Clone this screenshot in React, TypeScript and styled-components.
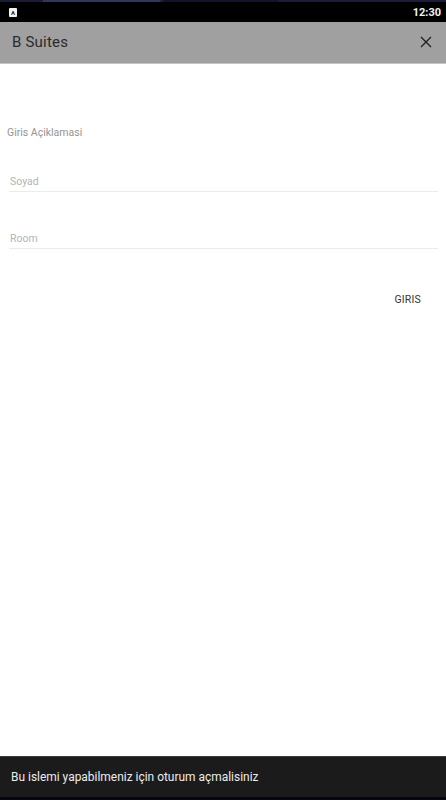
import React from "react";
import styled, { createGlobalStyle } from "styled-components";

const Global = createGlobalStyle`
  html, body {
    margin: 0;
    padding: 0;
    background: #fff;
  }
  * {
    box-sizing: border-box;
  }
`;

const Pantalla = styled.div`
  width: 446px;
  height: 800px;
  display: flex;
  flex-direction: column;
  overflow: hidden;
  background: #fff;
  font-family: Roboto, "Liberation Sans", sans-serif;
`;

const FranjaSuperior = styled.div`
  height: 2px;
  display: flex;
`;

const Tramo = styled.div<{ $ancho: number; $color: string }>`
  width: ${({ $ancho }) => $ancho}px;
  background: ${({ $color }) => $color};
`;

const BarraEstado = styled.div`
  height: 20px;
  padding: 0 5px 0 9px;
  display: flex;
  align-items: center;
  justify-content: space-between;
  background: #000;
`;

const IconoNotificacion = styled.div`
  width: 8px;
  height: 9px;
  border-radius: 1px;
  background: #f2f2f2;
  color: #222;
  font-size: 6px;
  font-weight: 700;
  line-height: 9px;
  text-align: center;
`;

const Hora = styled.span`
  color: #f2f2f2;
  font-size: 11px;
  font-weight: 700;
`;

const Cabecera = styled.header`
  height: 42px;
  padding: 0 14px 2px 12px;
  display: flex;
  align-items: center;
  justify-content: space-between;
  background: #a0a0a0;
  border-bottom: 1px solid #c4c4c4;
`;

const Titulo = styled.h1`
  margin: 0;
  color: #2b2b2b;
  font-size: 15px;
  font-weight: 400;
  letter-spacing: 0.2px;
`;

const Cerrar = styled.svg`
  width: 12px;
  height: 12px;
  stroke: #1f1f1f;
  stroke-width: 1.3;
  fill: none;
`;

const Contenido = styled.main`
  flex: 1;
  padding: 62px 8px 0 7px;
  display: flex;
  flex-direction: column;
`;

const Descripcion = styled.p`
  margin: 0 0 36px;
  color: #949494;
  font-size: 10.5px;
  line-height: 13px;
`;

const Campo = styled.div`
  margin: 0 0 40px 2px;
  height: 17px;
  padding: 0 0 2px 1px;
  border-bottom: 1px solid #ebebeb;
  color: #b4b4b4;
  font-size: 10.5px;
  line-height: 14px;
`;

const BotonEntrar = styled.button`
  align-self: flex-end;
  margin: 4px 17px 0 0;
  padding: 0;
  border: 0;
  background: none;
  color: #333;
  font-family: inherit;
  font-size: 10.5px;
  line-height: 13px;
  letter-spacing: 0.2px;
`;

const Aviso = styled.div`
  height: 41px;
  padding: 0 11px;
  display: flex;
  align-items: center;
  background: #1b1b1b;
  border-top: 1px solid #3a3a3a;
  color: #ececec;
  font-size: 11.95px;
`;

const FranjaInferior = styled.div`
  height: 3px;
  background: #05060f;
`;

const tramos = [
  { ancho: 43, color: "#1a1c33" },
  { ancho: 117, color: "#33355f" },
  { ancho: 3, color: "#22233f" },
  { ancho: 115, color: "#10132a" },
  { ancho: 168, color: "#1a1c38" },
];

export default function App() {
  return (
    <Pantalla>
      <Global />
      <FranjaSuperior>
        {tramos.map((t, i) => (
          <Tramo key={i} $ancho={t.ancho} $color={t.color} />
        ))}
      </FranjaSuperior>
      <BarraEstado>
        <IconoNotificacion>A</IconoNotificacion>
        <Hora>12:30</Hora>
      </BarraEstado>
      <Cabecera>
        <Titulo>B Suites</Titulo>
        <Cerrar viewBox="0 0 12 12">
          <path d="M1 1 L11 11 M11 1 L1 11" />
        </Cerrar>
      </Cabecera>
      <Contenido>
        <Descripcion>Giris Açiklamasi</Descripcion>
        <Campo>Soyad</Campo>
        <Campo>Room</Campo>
        <BotonEntrar>GIRIS</BotonEntrar>
      </Contenido>
      <Aviso>Bu islemi yapabilmeniz için oturum açmalisiniz</Aviso>
      <FranjaInferior />
    </Pantalla>
  );
}
